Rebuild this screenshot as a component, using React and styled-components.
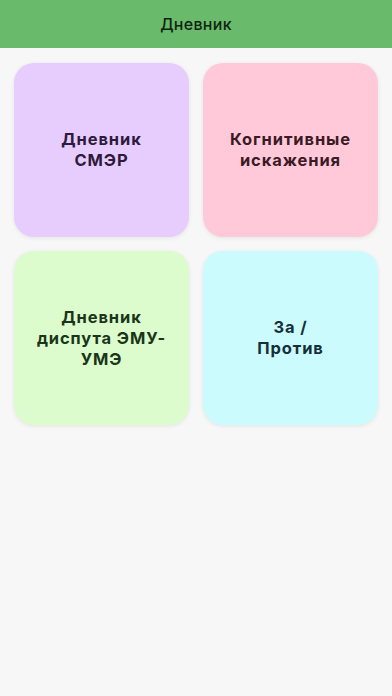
import React from 'react'
import styled, { createGlobalStyle } from 'styled-components'

const GlobalStyle = createGlobalStyle`
  html, body {
    margin: 0;
    padding: 0;
    background: #f7f7f7;
    font-family: Inter, Roboto, 'Noto Sans', sans-serif;
  }
`

const Screen = styled.div`
  min-height: 696px;
  background: #f7f7f7;
`

const Header = styled.header`
  height: 48px;
  background: #6aba6c;
  display: flex;
  align-items: center;
  justify-content: center;
  font-size: 16px;
  font-weight: 500;
  letter-spacing: 0.3px;
  color: #0f2410;
`

const Grid = styled.div`
  display: grid;
  grid-template-columns: 1fr 1fr;
  gap: 14px;
  padding: 15px 14px;
`

const Card = styled.button`
  height: 174px;
  border: none;
  border-radius: 20px;
  background: ${p => p.bg};
  color: ${p => p.fg};
  box-shadow: 0 1px 4px rgba(0, 0, 0, 0.08);
  display: flex;
  flex-direction: column;
  align-items: center;
  justify-content: center;
  padding: 0 8px;
  text-align: center;
  font-family: inherit;
  font-size: 16.5px;
  font-weight: 700;
  line-height: 21px;
  letter-spacing: 0.9px;
`

const items = [
  { lines: ['Дневник', 'СМЭР'], bg: '#e6cdfd', fg: '#2e1a3c' },
  { lines: ['Когнитивные', 'искажения'], bg: '#ffc9da', fg: '#3a1a24' },
  { lines: ['Дневник', 'диспута ЭМУ-', 'УМЭ'], bg: '#dcfccd', fg: '#1a3519' },
  { lines: ['За /', 'Против'], bg: '#ccfbfe', fg: '#15303a' },
]

export default function App() {
  return (
    <Screen>
      <GlobalStyle />
      <Header>Дневник</Header>
      <Grid>
        {items.map(it => (
          <Card key={it.lines.join(' ')} bg={it.bg} fg={it.fg}>
            {it.lines.map(l => <span key={l}>{l}</span>)}
          </Card>
        ))}
      </Grid>
    </Screen>
  )
}
